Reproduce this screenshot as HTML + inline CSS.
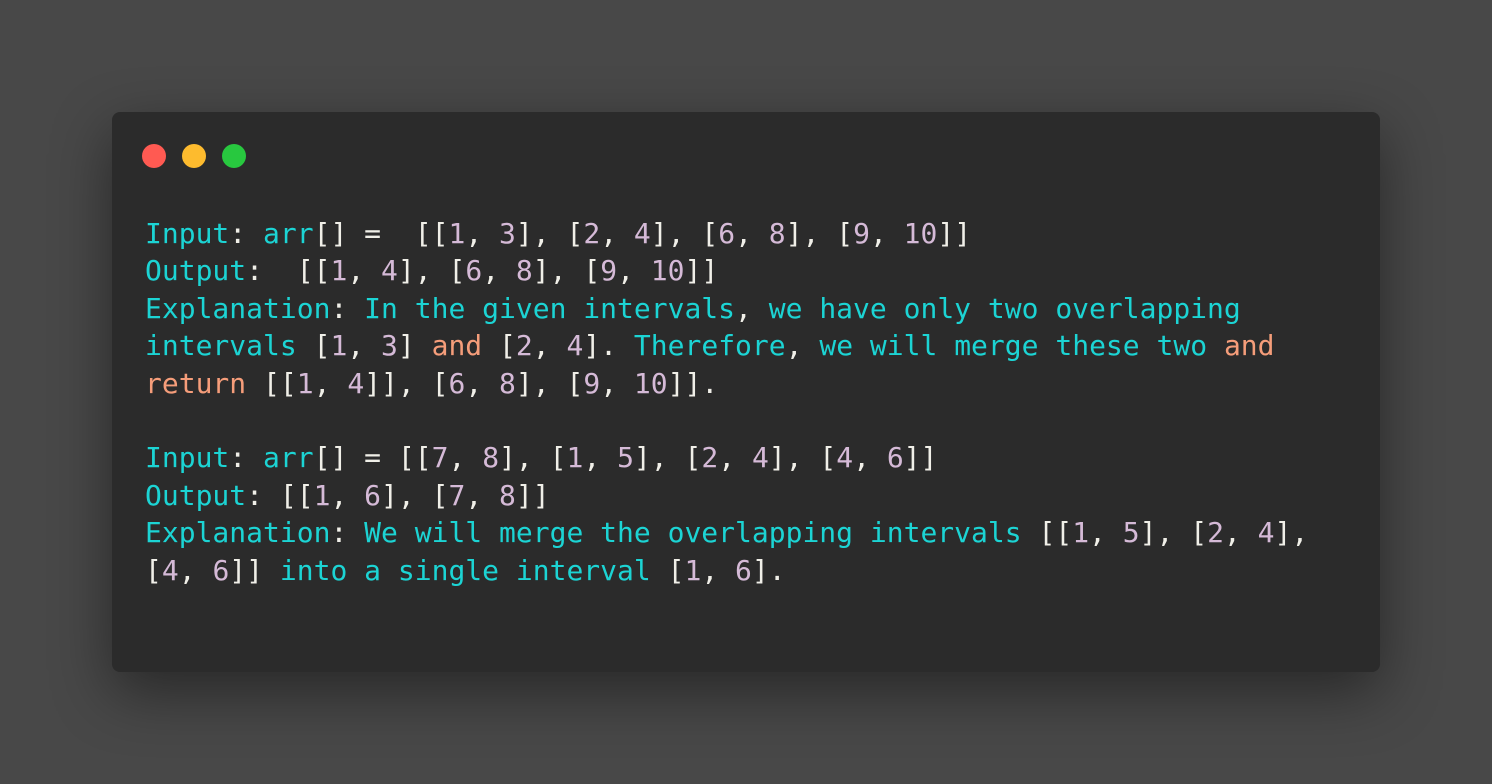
<!DOCTYPE html>
<html><head><style>
body{margin:0;width:1492px;height:784px;background:#484848;overflow:hidden;font-family:"DejaVu Sans Mono","Liberation Mono",monospace;}
.win{position:absolute;left:112px;top:112px;width:1268px;height:560px;background:#2b2b2b;border-radius:8px;box-shadow:0 20px 60px rgba(0,0,0,.45);}
.d{position:absolute;top:32px;width:24px;height:24px;border-radius:50%;}
pre{position:absolute;left:33px;top:103px;margin:0;font-family:inherit;font-size:28px;line-height:37.4px;color:#f0efe8;}
.c{color:#1cd4d4}.n{color:#d5bad7}.o{color:#f59d7a}
</style></head><body>
<div class="win">
<div class="d" style="left:30px;background:#ff5a52"></div>
<div class="d" style="left:70px;background:#fdbb2e"></div>
<div class="d" style="left:110px;background:#28c83f"></div>
<pre><span class="c">Input</span>: <span class="c">arr</span>[] =  [[<span class="n">1</span>, <span class="n">3</span>], [<span class="n">2</span>, <span class="n">4</span>], [<span class="n">6</span>, <span class="n">8</span>], [<span class="n">9</span>, <span class="n">10</span>]]
<span class="c">Output</span>:  [[<span class="n">1</span>, <span class="n">4</span>], [<span class="n">6</span>, <span class="n">8</span>], [<span class="n">9</span>, <span class="n">10</span>]]
<span class="c">Explanation</span>: <span class="c">In the given intervals</span>, <span class="c">we have only two overlapping</span>
<span class="c">intervals</span> [<span class="n">1</span>, <span class="n">3</span>] <span class="o">and</span> [<span class="n">2</span>, <span class="n">4</span>]. <span class="c">Therefore</span>, <span class="c">we will merge these two</span> <span class="o">and</span>
<span class="o">return</span> [[<span class="n">1</span>, <span class="n">4</span>]], [<span class="n">6</span>, <span class="n">8</span>], [<span class="n">9</span>, <span class="n">10</span>]].

<span class="c">Input</span>: <span class="c">arr</span>[] = [[<span class="n">7</span>, <span class="n">8</span>], [<span class="n">1</span>, <span class="n">5</span>], [<span class="n">2</span>, <span class="n">4</span>], [<span class="n">4</span>, <span class="n">6</span>]]
<span class="c">Output</span>: [[<span class="n">1</span>, <span class="n">6</span>], [<span class="n">7</span>, <span class="n">8</span>]]
<span class="c">Explanation</span>: <span class="c">We will merge the overlapping intervals</span> [[<span class="n">1</span>, <span class="n">5</span>], [<span class="n">2</span>, <span class="n">4</span>],
[<span class="n">4</span>, <span class="n">6</span>]] <span class="c">into a single interval</span> [<span class="n">1</span>, <span class="n">6</span>].</pre>
</div>
</body></html>
